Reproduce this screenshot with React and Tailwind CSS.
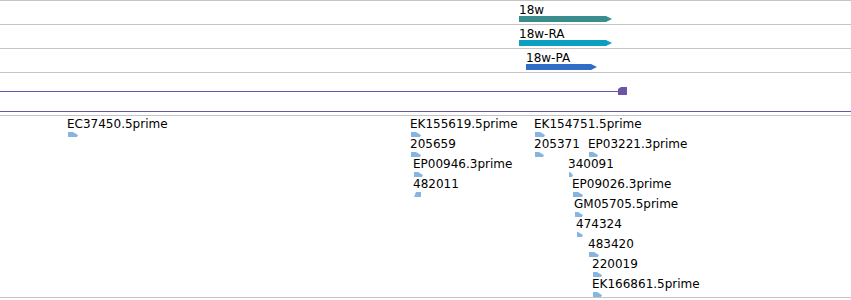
const FONT = { fontFamily: '"DejaVu Sans", Verdana, sans-serif' };

const transcripts = [
  { label: "18w", left: 519, width: 93, color: "#3a8d8d" },
  { label: "18w-RA", left: 519, width: 93, color: "#0c9fbf" },
  { label: "18w-PA", left: 526, width: 71, color: "#2f6dc6" },
];

const features = [
  { label: "EC37450.5prime", x: 68, row: 0, w: 10 },
  { label: "EK155619.5prime", x: 411, row: 0, w: 10 },
  { label: "205659", x: 411, row: 1, w: 10 },
  { label: "EP00946.3prime", x: 414, row: 2, w: 9 },
  { label: "482011", x: 414, row: 3, w: 7, rev: true },
  { label: "EK154751.5prime", x: 535, row: 0, w: 10 },
  { label: "205371", x: 535, row: 1, w: 9 },
  { label: "EP03221.3prime", x: 589, row: 1, w: 9 },
  { label: "340091", x: 569, row: 2, w: 4 },
  { label: "EP09026.3prime", x: 573, row: 3, w: 10 },
  { label: "GM05705.5prime", x: 575, row: 4, w: 8 },
  { label: "474324", x: 577, row: 5, w: 6 },
  { label: "483420", x: 589, row: 6, w: 10 },
  { label: "220019", x: 593, row: 7, w: 9 },
  { label: "EK166861.5prime", x: 593, row: 8, w: 9 },
];

function Bar({ width, color }) {
  return (
    <svg width={width} height="6" className="block">
      <polygon points={`0,0 ${width - 6},0 ${width},3 ${width - 6},6 0,6`} fill={color} />
    </svg>
  );
}

function Pennant({ w, rev }) {
  const pts = rev
    ? `${w},0 ${w},5 0,5 ${Math.max(w - 5, 1)},0`
    : `0,0 ${Math.max(w - 5, 1)},0 ${w},3 ${w - 1},5 0,5`;
  return (
    <svg width={w} height="5" className="block">
      <polygon points={pts} fill="#86b6e0" />
    </svg>
  );
}

export default function App() {
  return (
    <div className="w-[851px] h-[300px] bg-white overflow-hidden text-[12px] leading-[14px] text-black" style={FONT}>
      <div className="border-t border-[#c4c4c4]">
        {transcripts.map((t) => (
          <div key={t.label} className="relative h-[24px] border-b border-[#c4c4c4]">
            <div className="absolute top-[2px]" style={{ left: t.left }}>{t.label}</div>
            <div className="absolute top-[15px]" style={{ left: t.left }}>
              <Bar width={t.width} color={t.color} />
            </div>
          </div>
        ))}
        <div className="relative h-[39px] border-b border-[#6c55a6]">
          <div className="absolute left-0 top-[18px] h-px w-[620px] bg-[#6c55a6]" />
          <svg width="9" height="8" className="absolute left-[618px] top-[14px]">
            <polygon points="0,2 3,0 9,0 9,8 0,8" fill="#6c55a6" />
          </svg>
        </div>
      </div>
      <div className="mt-[3px] relative h-[183px] border-t border-b border-[#c4c4c4]">
        {features.map((f) => (
          <div key={f.label} className="absolute" style={{ left: f.x, top: 1 + f.row * 20 }}>
            <div className="-ml-px whitespace-nowrap">{f.label}</div>
            <div className="mt-px">
              <Pennant w={f.w} rev={f.rev} />
            </div>
          </div>
        ))}
      </div>
    </div>
  );
}
